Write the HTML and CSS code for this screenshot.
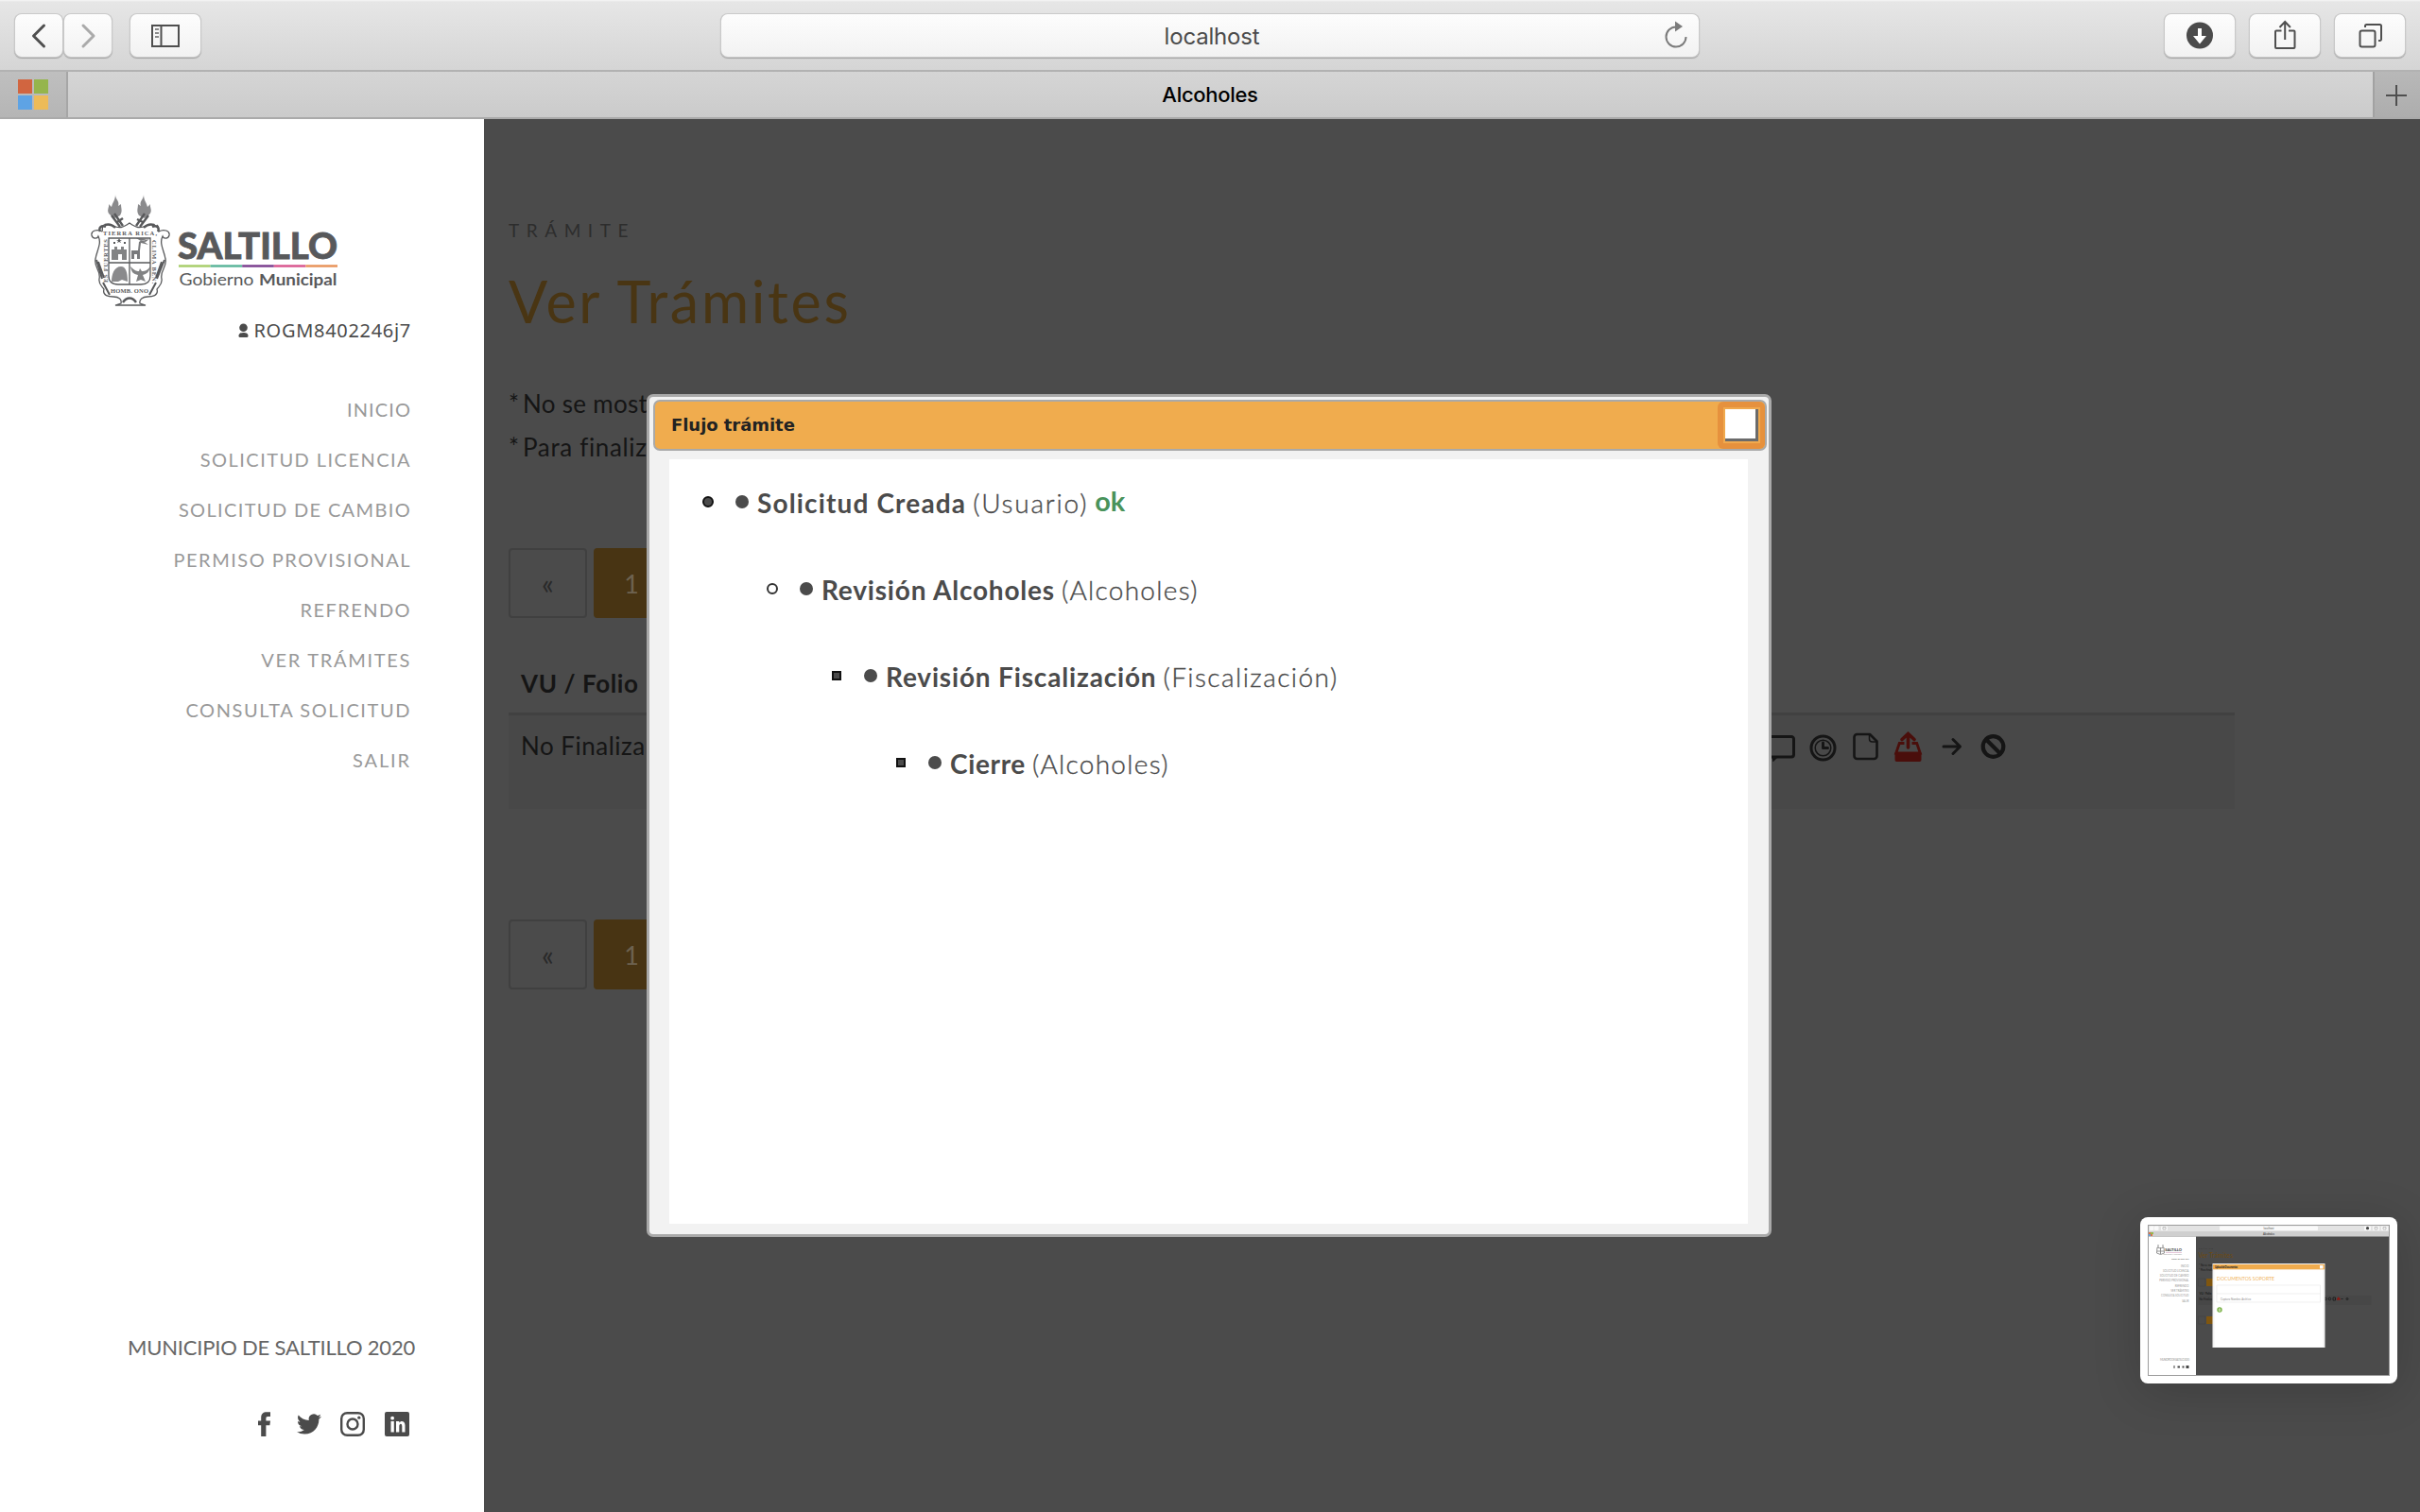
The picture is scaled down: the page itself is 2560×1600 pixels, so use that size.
FILE: index.html
```html
<!DOCTYPE html>
<html lang="es">
<head>
<meta charset="utf-8">
<title>Alcoholes</title>
<link rel="stylesheet" href="styles.css">
</head>
<body>
<header class="toolbar">
  <div class="group group-nav">
    <button class="btn btn-arrow" aria-label="Atrás"><svg width="50" height="45" viewBox="0 0 50 45"><path d="M30.500 12 19.500 23l11 11" class="ln-thick"/></svg></button>
    <button class="btn btn-arrow" aria-label="Adelante"><svg width="51" height="45" viewBox="0 0 51 45"><path d="m20 12 11 11-11 11" class="ln-thick dim"/></svg></button>
    <button class="btn btn-side" aria-label="Barra lateral"><svg width="74" height="45" viewBox="0 0 74 45"><path d="M23 12h28v22H23zM32.500 12v22" class="ln"/><path d="M26 16h4M26 20h4M26 24h4" class="ln dim2"/></svg></button>
  </div>
  <div class="address">
    <span>localhost</span>
    <svg class="reload" width="30" height="34" viewBox="0 0 30 34"><path d="M15 7.500A10.500 10.500 0 1 0 25.500 18" class="ln-gray"/><path d="M14 1.500v11l8-5.500z" fill="#7b7b7b"/></svg>
  </div>
  <div class="group group-tools">
    <button class="btn btn-tool" aria-label="Descargas"><svg width="74" height="45" viewBox="0 0 74 45"><circle cx="37" cy="22.500" r="14" fill="#4b4b4b"/><path d="M35 15h4v8h5l-7 8.500-7-8.500h5z" fill="#fff"/></svg></button>
    <button class="btn btn-tool" aria-label="Compartir"><svg width="74" height="45" viewBox="0 0 74 45"><path d="M33.500 17.500H28a1 1 0 0 0-1 1V35a1 1 0 0 0 1 1h18.500a1 1 0 0 0 1-1V18.500a1 1 0 0 0-1-1H41M37.200 27V8M31.500 14l5.700-6 5.700 6" class="ln"/></svg></button>
    <button class="btn btn-tool" aria-label="Pestañas"><svg width="74" height="45" viewBox="0 0 74 45"><rect x="26.500" y="17.500" width="16" height="17" rx="2" class="ln"/><path d="M32 14v-1.500a1.500 1.500 0 0 1 1.500-1.500h14a1.500 1.500 0 0 1 1.500 1.500V26.500a1.500 1.500 0 0 1-1.500 1.500H46" class="ln"/></svg></button>
  </div>
</header>
<div class="tabs">
  <div class="pinned"><i class="tile red"></i><i class="tile green"></i><i class="tile blue"></i><i class="tile yellow"></i></div>
  <div class="tab">Alcoholes</div>
  <div class="newtab"><svg width="48" height="48" viewBox="0 0 48 48"><path d="M23 14v22M12 25h22" class="ln"/></svg></div>
</div>

<div class="page">
  <aside class="sidebar">
    <svg class="logo" width="270" height="120" viewBox="0 0 270 120" role="img" aria-label="Saltillo Gobierno Municipal">
      <g fill="none" stroke="#58595b" stroke-width="1.300">
        <path d="M14 41c-5-3-12-1-11 4 1 4 6 4 7 1 4 8-2 16-3 24-2 9 6 12 4 21-1 6 3 8 5 11-2 7 5 8 10 8 6 0 9 3 8 7l-6 2h32l-6-2c-1-4 3-7 8-7 5 0 12-1 10-8 2-3 6-5 5-11-2-9 6-12 4-21-1-8-7-16-3-24 1 3 6 3 7-1 1-5-6-7-11-4-1-3 1-5-2-7"/>
        <path d="M14 41c1-3-1-5 2-7 4-1 7 0 10 1 6 3 10 2 17-3 7 5 11 6 17 3 3-1 6-2 10-1"/>
        <path d="M21 48h44v40q0 9-10 9H31q-10 0-10-9zM43 48v49M21 74h44"/>
        <path d="M8 71l6 20M80 71l-8 20M10 73l6 17M77 73l-6 17M15 95l7 13M71 95l-7 13" stroke-width="2"/>
        <path d="M36 35 27 22M33 36l-9-12M50 35l9-13M54 36l9-12M30 31l6-4M51 28l6 3" stroke-width="2.400"/>
        <path d="M18 36c-5-2-8 1-6 5M67 36c5-2 8 1 6 5M36 116c4-6 10-6 14 0M17 34q6-2 11 3M69 34q-6-2-11 3" stroke-width="2.400"/>
      </g>
      <g fill="#58595b">
        <path d="M28 2c0 5 5 7 3 12l3-2c0 5 2 7-1 12l-6 3-5-4c-4-4 0-8-1-11l3 3c1-5 4-7 4-13z" fill-opacity=".7"/>
        <path d="M58 2c0 5-5 7-3 12l-3-2c0 5-2 7 1 12l6 3 5-4c4-4 0-8 1-11l-3 3c-1-5-4-7-4-13z" fill-opacity=".7"/>
        <path d="M24 71V60h3v-3h3v3h4v-3h3v3h3v11h-5v-6h-4v6z" fill-opacity=".75"/>
        <path d="m32 48 1 2h2l-2 1 1 2-2-1-2 1 1-2-2-1h2zM26 52h2v2h-2zM37 52h2v2h-2z"/>
        <path d="M45 70v-9h7l1-9 3-2 7 5-8-2-1 8v9h-3v-5h-3v5zM50 48l12 1-7 2zM56 51l8-2-4 3z" fill-opacity=".8"/>
        <path d="M24 94c0-8 3-16 10-16 5 0 7 6 7 16l-6-2-4 2z" fill-opacity=".7"/>
        <path d="M44 78c4 4 6 5 9 5l1-3 2 3c4 0 6-1 9-5-1 6-4 8-8 9l3 7-5-2-5 2 2-7c-5-1-7-3-8-9z" fill-opacity=".75"/>
      </g>
      <g class="motto">
        <text x="15" y="45" textLength="57">TIERRA RICA,</text>
        <text transform="translate(20 95) rotate(-90)" textLength="46">ES FUERTES</text>
        <text transform="translate(67 50) rotate(90)" textLength="46">CLIMA BEN.</text>
        <text x="23" y="106" textLength="40">HOMB. ONO</text>
      </g>
      <text x="94" y="69.500" class="brand" textLength="169" lengthAdjust="spacingAndGlyphs">SALTILLO</text>
      <path d="M95 77.500h33.600" stroke="#a8ce6b" stroke-width="2.400"/>
      <path d="M128.600 77.500h33.600" stroke="#5bb59a" stroke-width="2.400"/>
      <path d="M162.200 77.500h33.600" stroke="#7b3f8f" stroke-width="2.400"/>
      <path d="M195.800 77.500h33.600" stroke="#d9578f" stroke-width="2.400"/>
      <path d="M229.400 77.500H263" stroke="#e8935a" stroke-width="2.400"/>
      <text x="95.500" y="97.500" class="gov" textLength="79" lengthAdjust="spacingAndGlyphs">Gobierno</text>
      <text x="180" y="97.500" class="gov gov-bold" textLength="82.500" lengthAdjust="spacingAndGlyphs">Municipal</text>
    </svg>
    <div class="user"><svg width="11" height="16" viewBox="0 0 11 16"><circle cx="5.500" cy="4.700" r="4.300" fill="#4b4b4b"/><path d="M.5 13.500C.5 10.500 3 10 5.500 10s5 .5 5 3.500a1.500 1.500 0 0 1-1.500 1.500H2a1.500 1.500 0 0 1-1.500-1.500z" fill="#4b4b4b"/></svg><span>ROGM8402246j7</span></div>
    <nav class="menu">
      <a>INICIO</a><a>SOLICITUD LICENCIA</a><a>SOLICITUD DE CAMBIO</a><a>PERMISO PROVISIONAL</a><a>REFRENDO</a><a>VER TRÁMITES</a><a>CONSULTA SOLICITUD</a><a>SALIR</a>
    </nav>
    <footer class="foot">
      <div class="copy">MUNICIPIO DE SALTILLO 2020</div>
      <div class="social">
        <svg viewBox="0 0 26 26"><path d="M9.200 26V14.200H6V9.500h3.200V6.200C9.200 2.100 11.500.2 15 .2h4v4.700h-2.600c-1.600 0-2 .8-2 2.100v2.500H19l-.6 4.700h-4V26z"/></svg>
        <svg viewBox="0 0 24 24"><path d="M23.950 4.570a10 10 0 0 1-2.820.77 4.960 4.960 0 0 0 2.160-2.720c-.95.550-2 .95-3.130 1.180a4.920 4.920 0 0 0-8.380 4.480C7.690 8.100 4.070 6.130 1.640 3.160a4.820 4.820 0 0 0-.67 2.480c0 1.710.87 3.210 2.190 4.100a4.900 4.900 0 0 1-2.230-.62v.06a4.920 4.920 0 0 0 3.950 4.830 5 5 0 0 1-2.210.080 4.940 4.940 0 0 0 4.600 3.420A9.870 9.870 0 0 1 0 19.540a14 14 0 0 0 7.550 2.210c9.050 0 14-7.500 14-13.980 0-.21 0-.42-.02-.63a9.940 9.940 0 0 0 2.460-2.550z"/></svg>
        <svg viewBox="0 0 26 26"><rect x="1.200" y="1.200" width="23.600" height="23.600" rx="6" class="social-ln"/><circle cx="13" cy="13" r="5.500" class="social-ln"/><circle cx="19.800" cy="6.200" r="1.600"/></svg>
        <svg viewBox="0 0 26 26"><path fill-rule="evenodd" d="M2 0h22a2 2 0 0 1 2 2v22a2 2 0 0 1-2 2H2a2 2 0 0 1-2-2V2a2 2 0 0 1 2-2zm4.500 10v11.500h3.300V10zM8.100 4.800a1.900 1.900 0 1 0 0 3.800 1.900 1.900 0 0 0 0-3.800zM12 10v11.500h3.300v-6.200c0-3.300 3-3.400 3 0v6.200h3.200v-7.200c0-5-4.600-5.300-6.200-2.800V10z"/></svg>
      </div>
    </footer>
  </aside>

  <main class="main">
    <div class="eyebrow">TRÁMITE</div>
    <h1>Ver Trámites</h1>
    <p class="note note-a"><span class="star">*</span>No se most</p>
    <p class="note note-b"><span class="star">*</span>Para finaliz</p>
    <div class="pager"><span class="pg">«</span><span class="pg on">1</span></div>
    <div class="table">
      <div class="thead">VU / Folio</div>
      <div class="trow">
        <span class="cell">No Finaliza</span>
        <div class="actions">
          <svg viewBox="-22.500 -16 45 32"><path d="M-14-8a2.500 2.500 0 0 1 2.500-2.500h23A2.500 2.500 0 0 1 14-8V8.500A2.500 2.500 0 0 1 11.500 11H-11.500A2.500 2.500 0 0 1-14 8.500z" class="act"/><path d="M-9 10.500h7l-6 6z" fill="#151515"/></svg>
          <svg viewBox="-22.500 -16 45 32"><circle cy="1.500" r="12.500" class="act"/><circle cy="1.500" r="8.300" class="act thin"/><path d="M0-4v5.500h5" class="act"/></svg>
          <svg viewBox="-22.500 -16 45 32"><path d="M-9-13H4.500L12-5.500V10a3 3 0 0 1-3 3H-9a3 3 0 0 1-3-3v-20a3 3 0 0 1 3-3z" class="act mid"/><path d="M4-12.500V-8a3 3 0 0 0 3 3h4.500" class="act thin"/></svg>
          <svg viewBox="-22.500 -16 45 32"><path d="M-4-3.500h-5.200L-12.800 7h25.600L9.200-3.500H4" class="up"/><path d="M-14 6.500h28V14a2 2 0 0 1-2 2h-24a2 2 0 0 1-2-2z" fill="#4a0e0b"/><path d="M0 1v-14M-6.500-7.500 0-13.500l6.500 6" class="up up-arrow"/></svg>
          <svg viewBox="-24 -16 45 32"><path d="M-9 0H7.500M1-7.500 8.500 0 1 7.500" class="act"/></svg>
          <svg viewBox="-22.500 -16 45 32"><circle r="10.800" class="act wide"/><path d="m-7.500-7.500 15 15" class="act wide"/></svg>
        </div>
      </div>
    </div>
    <div class="pager pager-b"><span class="pg">«</span><span class="pg on">1</span></div>
  </main>
</div>

<section class="modal">
  <header class="mhead"><b>Flujo trámite</b><div class="closebox"><button class="close" aria-label="Cerrar"></button></div></header>
  <div class="mbody">
    <div class="step s1"><i class="mk disc"></i><i class="dot"></i><b>Solicitud Creada</b><span>(Usuario)</span><strong class="ok">ok</strong></div>
    <div class="step s2"><i class="mk ring"></i><i class="dot"></i><b>Revisión Alcoholes</b><span>(Alcoholes)</span></div>
    <div class="step s3"><i class="mk sq"></i><i class="dot"></i><b>Revisión Fiscalización</b><span>(Fiscalización)</span></div>
    <div class="step s4"><i class="mk sq"></i><i class="dot"></i><b>Cierre</b><span>(Alcoholes)</span></div>
  </div>
</section>

<div class="thumb">
  <svg width="256" height="160" viewBox="0 0 256 160">
    <rect width="256" height="160" fill="#4b4b4b"/>
    <rect width="256" height="7" fill="#e3e3e3"/><rect y="7" width="256" height="5.500" fill="#cfcfcf"/>
    <g fill="#fafafa"><rect x="2" y="1.500" width="4.500" height="4.500" rx="1"/><rect x="7" y="1.500" width="4.500" height="4.500" rx="1"/><rect x="14" y="1.500" width="7" height="4.500" rx="1"/><rect x="76" y="1.500" width="104" height="4.500" rx="1"/><rect x="229" y="1.500" width="7" height="4.500" rx="1"/><rect x="238" y="1.500" width="7" height="4.500" rx="1"/><rect x="247" y="1.500" width="7" height="4.500" rx="1"/></g>
    <circle cx="232.500" cy="3.700" r="1.600" fill="#444"/><path d="M240 2.500h3v2.500h-3zM249 2.500h3v2.500h-3zM16 2.500h3v2.500h-3z" fill="none" stroke="#888" stroke-width=".5"/>
    <rect x="1" y="8" width="4" height="4" fill="#d9744b"/><rect x="3" y="8" width="3" height="2" fill="#95b84e"/><rect x="1" y="10" width="2" height="2" fill="#5fa3e4"/>
    <rect y="12.500" width="51" height="148" fill="#fff"/>
    <path d="M11 24v-3M16 24v-3M10 24q3.500 2 7 0l.5 6q-4 3-8 0zM13.500 24v7M10 28h7" fill="none" stroke="#888" stroke-width=".9"/>
    <path d="M19 29.500h17" stroke="#c98ab0" stroke-width=".5"/>
    <g class="mini mini-side">
      <text x="36" y="28" class="mini-brand">SALTILLO</text><text x="36" y="32" class="mini-sm">Gobierno Municipal</text>
      <text x="43.500" y="36.500" class="mini-sm mini-dark">ROGM8402246j7</text>
      <text x="43.500" y="44.500">INICIO</text><text x="43.500" y="49.800">SOLICITUD LICENCIA</text><text x="43.500" y="55">SOLICITUD DE CAMBIO</text><text x="43.500" y="60.300">PERMISO PROVISIONAL</text><text x="43.500" y="65.600">REFRENDO</text><text x="43.500" y="71">VER TRÁMITES</text><text x="43.500" y="76">CONSULTA SOLICITUD</text><text x="43.500" y="81.500">SALIR</text>
      <text x="44" y="143.500" textLength="31">MUNICIPIO DE SALTILLO 2020</text>
    </g>
    <g fill="#444"><rect x="27.500" y="149" width="1" height="3"/><rect x="31.500" y="149.500" width="2.500" height="2"/><rect x="36.500" y="149.500" width="2" height="2"/><rect x="40.500" y="149" width="3" height="3"/></g>
    <rect x="53.500" y="75" width="183" height="10" fill="#474747"/>
    <g class="mini mini-main">
      <text x="128" y="4.800" text-anchor="middle" fill="#555">localhost</text><text x="128" y="11" text-anchor="middle">Alcoholes</text>
      <text x="54" y="26" class="mini-eye">TRÁMITE</text>
      <text x="53.500" y="34.500" class="mini-h1" textLength="36.500">Ver Trámites</text>
      <text x="54" y="44">* No se most</text><text x="54" y="48.500">* Para finaliz</text>
      <text x="54.500" y="73.500" font-weight="700">VU / Folio</text><text x="54.500" y="80">No Finaliza</text>
    </g>
    <rect x="62" y="57" width="8" height="8" fill="#80560f"/><rect x="62" y="97" width="8" height="8" fill="#80560f"/>
    <path d="M53.500 57h7.500v8h-7.500zM53.500 97h7.500v8h-7.500z" fill="none" stroke="#404040" stroke-width=".4"/>
    <g fill="none" stroke="#161616" stroke-width=".8"><circle cx="188" cy="78.500" r="1.300"/><circle cx="192.500" cy="78.500" r="1.300"/><path d="M196 77h2.500v3H196zM204.500 78.500h2"/><circle cx="211" cy="78.500" r="1"/></g>
    <path d="M200 79.800h3.500v-1.300l-1.800-2.300-1.700 2.300z" fill="#8a1712"/>
    <rect x="68.500" y="41" width="119" height="89" fill="#f2f2f2"/><rect x="70.500" y="47.500" width="115" height="82" fill="#fff"/>
    <rect x="69" y="42" width="118" height="5.300" fill="#f0ac4e"/><rect x="182" y="43" width="3.500" height="3.500" fill="#fff"/>
    <g class="mini">
      <text x="71" y="46" font-weight="700" textLength="24" fill="#222">Upload de Documentos</text>
      <text x="73" y="58.500" class="mini-title" textLength="61" lengthAdjust="spacingAndGlyphs">DOCUMENTOS SOPORTE</text>
      <text x="77" y="79.500" textLength="32" fill="#888">Captura Nombre Archivo</text>
    </g>
    <path d="M73 64h109.500v18H73zM73 73h109.500" fill="none" stroke="#e5e5e5" stroke-width=".6"/>
    <circle cx="76" cy="90" r="2.100" fill="none" stroke="#74ad3d" stroke-width="1.200"/><path d="M74 90h4" stroke="#74ad3d"/>
    <rect x=".5" y=".5" width="255" height="159" fill="none" stroke="#9c9c9c"/>
  </svg>
</div>
</body>
</html>
```
FILE: styles.css
```css
*{box-sizing:border-box}
body{margin:0;width:2560px;height:1600px;overflow:hidden;position:relative;background:#4b4b4b;font-family:Lato,sans-serif;color:#4b4b4b}
svg{display:block;flex:none}
.ln,.ln-thick,.ln-gray{fill:none;stroke:#4f4f4f;stroke-width:2}
.ln-thick{stroke-width:3;stroke-linecap:round;stroke-linejoin:round}
.ln-gray{stroke:#7b7b7b}
.dim{stroke:#aaa}
.dim2{stroke:#8a8a8a}

.toolbar{height:76px;display:flex;justify-content:space-between;align-items:flex-start;padding:15px 16px;background:linear-gradient(#f6f6f6 0,#e6e6e6 2px,#d5d5d5 100%);border-bottom:2px solid #b2b2b2}
.group{display:flex}
.btn{height:45px;padding:0;border:0;border-radius:7px;background:linear-gradient(#fdfdfd,#f2f2f2);box-shadow:0 0 0 1px #c9c9c9,0 1px 1px 1px #a4a4a4}
.btn-arrow{width:50px;margin-right:2px}
.btn-side{width:74px;margin-left:18px}
.group-nav{width:747px}
.address{flex:none;width:1034px;height:45px;border-radius:7px;background:linear-gradient(#fdfdfd,#f2f2f2);box-shadow:0 0 0 1px #c9c9c9,0 1px 1px 1px #a4a4a4;display:flex;align-items:center;padding:2px 9px 0 43px;font:400 24px/42px Inter,sans-serif;letter-spacing:-.19px}
.address span{flex:1;text-align:center}
.reload{margin-top:-2px}
.group-tools{width:747px;justify-content:flex-end;gap:16px}
.btn-tool{width:74px}

.tabs{height:50px;display:flex;border-bottom:2px solid #aaa;background:linear-gradient(#d5d5d5,#cbcbcb)}
.pinned{width:72px;border-right:2px solid #a6a6a6;background:linear-gradient(#bfbfbf,#b5b5b5);display:grid;grid-template-columns:15px 15px;grid-template-rows:15px 15px;gap:2px;padding:8px 0 0 19px}
.red{background:#d16540}.green{background:#95b54c}.blue{background:#5ea3e4}.yellow{background:#edbb58}
.tab{flex:1;text-align:center;font:500 22px/49px Inter,sans-serif;letter-spacing:-.3px;color:#000;padding-right:22px}
.newtab{width:50px;border-left:2px solid #a2a2a2;background:linear-gradient(#b8b8b8,#adadad)}

.page{display:flex;height:1474px}
.sidebar{width:512px;background:#fff;padding:78px 79px 0 94px;display:flex;flex-direction:column}
.motto{font:700 6.500px "Liberation Serif",serif;fill:#58595b}
.brand{font:900 38px Lato,sans-serif;fill:#58595b;stroke:#58595b;stroke-width:.8}
.gov{font:400 17.500px Lato,sans-serif;fill:#58595b}
.gov-bold{font-weight:700}
.user{display:flex;justify-content:flex-end;align-items:center;gap:5px;margin:11px -2px 0 0;font:400 20px/30px "Noto Sans",sans-serif;letter-spacing:.7px}
.menu{display:flex;flex-direction:column;align-items:flex-end;margin:42px -2px 0 0;color:#999;font-size:20px;line-height:53px;letter-spacing:1.450px}
.menu a:nth-child(1){letter-spacing:1.100px}
.menu a:nth-child(3){letter-spacing:1.350px}
.menu a:nth-child(4){letter-spacing:1.500px}
.menu a:nth-child(6){letter-spacing:1.690px}
.menu a:nth-child(7){letter-spacing:1.580px}
.menu a:nth-child(8){letter-spacing:1.870px}
.foot{margin-top:auto;padding-bottom:80px}
.copy{text-align:right;margin:0 -6px 53px 0;font-size:22px;line-height:30px;letter-spacing:-.2px;color:#666;white-space:nowrap}
.social{display:flex;justify-content:flex-end;gap:20.700px}
.social svg{width:26px;height:26px;fill:#4b4b4b}
.social .social-ln{fill:none;stroke:#4b4b4b;stroke-width:2.400}

.main{flex:1;padding:103px 196px 0 26px;color:#151515;font-size:26px}
.eyebrow{font-size:19px;line-height:30px;letter-spacing:7.550px;color:#2d2d2d}
h1{margin:20px 0 0;font-weight:400;font-size:61px;line-height:80px;letter-spacing:2.700px;color:#493513}
.note{margin:0;line-height:46px;height:46px;display:flex}
.star{width:15px}
.note-a{margin-top:45px;letter-spacing:.3px}
.note-b{letter-spacing:.65px}
.pager{display:flex;gap:7px;margin-top:84px}
.pg{width:83px;height:74px;border:2px solid #404040;border-radius:4px;line-height:70px;text-align:center;font-size:30px;color:#292929}
.pg.on{width:80px;background:#483413;border-color:#483413;color:#6d6250;font-size:27px;line-height:72px}
.table{margin-top:39px}
.thead{height:64px;padding-left:13px;line-height:60px;font-weight:700;letter-spacing:.6px;border-bottom:3px solid #414141}
.trow{height:99px;padding:12px 233px 0 13px;background:#484848;display:flex;justify-content:space-between;line-height:41px;letter-spacing:.5px}
.actions{display:flex;padding-top:5px}
.actions svg{width:45px;height:32px}
.act{fill:none;stroke:#151515;stroke-width:3;stroke-linejoin:round;stroke-linecap:round}
.act.thin{stroke-width:1.500}
.act.mid{stroke-width:2.600}
.act.wide{stroke-width:4.200}
.up{fill:none;stroke:#4a0e0b;stroke-width:2.800}
.up-arrow{stroke-width:3.600;stroke-linecap:round}
.pager-b{margin-top:117px}

.modal{position:absolute;left:684px;top:417px;width:1190px;height:892px;border:3px solid #a9a9a9;border-radius:7px;background:#f2f2f2;padding:3px 3px 0 4px}
.mhead{width:1178px;height:54px;border:2px solid #a9a9a9;border-radius:7px;background:#f0ac4e;display:flex;justify-content:space-between;padding-left:17px;font:700 18px/50px "DejaVu Sans",sans-serif;letter-spacing:-.05px;color:#222}
.closebox{width:50px;height:50px;border-radius:6px;background:#e6913d;padding:6px}
.close{display:block;width:39px;height:38px;border:2px solid #f0a94e;background:#fff;padding:0;box-shadow:inset -3px -3px 0 #6b6b6b}
.mbody{margin:9px 0 0 17px;width:1141px;height:809px;background:#fff}
.step{display:flex;align-items:center;height:92px;line-height:92px;font-size:28px;white-space:nowrap}
.s1{padding-left:35px}.s2{padding-left:103px}.s3{padding-left:171px}.s4{padding-left:239px}
.mk{width:12px;height:12px;flex:none}
.disc{border:2px solid #111;border-radius:50%;background:#4b4b4b}
.ring{border:2px solid #333;border-radius:50%}
.sq{width:10px;height:10px;margin:0 1px;border:2px solid #111;background:#4b4b4b}
.mk,.dot{position:relative;top:-1px}
.dot{width:14px;height:14px;border-radius:50%;background:#4b4b4b;margin:0 9px 0 23px;flex:none}
.step span{font-weight:300;margin-left:7px;-webkit-text-stroke:.35px #4b4b4b}
.step .ok{color:#49935b;font-size:29px;margin-left:7px;position:relative;top:-2px}
.s1 b{letter-spacing:1.150px}.s1 span{letter-spacing:1.800px}
.s2 b{letter-spacing:.8px}.s2 span,.s4 span{letter-spacing:1.300px}
.s3 b{letter-spacing:.83px}.s3 span{letter-spacing:1.450px}
.s4 b{letter-spacing:.65px}

.thumb{position:absolute;left:2264px;top:1288px;width:272px;height:176px;border-radius:8px;background:#fff;padding:8px;box-shadow:0 8px 50px rgba(0,0,0,.18)}
.mini{font:400 2.800px Lato,sans-serif}
.mini-side{fill:#999;text-anchor:end}
.mini-main{fill:#161616}
.mini-brand{font-size:4px;font-weight:900;fill:#444}
.mini-sm{font-size:2.300px}
.mini-dark{fill:#444}
.mini-eye{font-size:2px;letter-spacing:1px;fill:#2b2b2b}
.mini-h1{font-size:6.600px;fill:#6b4a12}
.mini-title{font-size:5.800px;fill:#f0b45e}
```
